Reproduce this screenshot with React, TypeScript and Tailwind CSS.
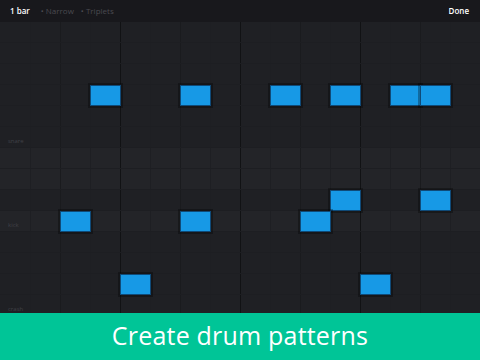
import React from "react";

const rows: { light?: boolean; label?: string; cells: number[] }[] = [
  { cells: [] },
  { cells: [] },
  { cells: [] },
  { cells: [3, 6, 9, 11, 13, 14] },
  { cells: [] },
  { cells: [], label: "snare" },
  { cells: [], light: true },
  { cells: [], light: true },
  { cells: [11, 14] },
  { cells: [2, 6, 10], label: "kick", light: true },
  { cells: [] },
  { cells: [] },
  { cells: [4, 12] },
  { cells: [], label: "crash" },
];

function lineClass(i: number) {
  if (i === 4 || i === 8 || i === 12) return "border-l border-[#111214]";
  if (i === 2 || i === 6 || i === 10 || i === 14) return "border-l border-[#1a1b1e]";
  return "border-l border-[#1e1f23]";
}

export default function App() {
  return (
    <div
      className="w-[480px] h-[360px] overflow-hidden flex flex-col bg-[#1f2024]"
      style={{ fontFamily: "'Open Sans', 'Liberation Sans', sans-serif" }}
    >
      <div className="h-[22px] shrink-0 bg-[#18181c] flex items-center px-[10px] text-[8px]">
        <span className="text-white font-semibold">1 bar</span>
        <span className="ml-[11px] text-[#4a4a50]">• Narrow</span>
        <span className="ml-[7px] text-[#4a4a50]">• Triplets</span>
        <span className="ml-auto mr-[1px] text-white font-semibold">Done</span>
      </div>
      <div className="h-[291px] shrink-0 overflow-hidden flex flex-col">
        {rows.map((r, ri) => (
          <div
            key={ri}
            className={`relative h-[21px] shrink-0 flex border-b border-[#1d1e22] ${
              r.light ? "bg-[#232428]" : "bg-[#1f2024]"
            }`}
          >
            {Array.from({ length: 16 }).map((_, ci) => (
              <div
                key={ci}
                className={`relative w-[30px] h-full shrink-0 ${ci > 0 ? lineClass(ci) : ""}`}
              >
                {r.cells.includes(ci) && (
                  <div className="absolute left-[-1px] top-0 w-[31px] h-[21px] z-10 bg-[#1799e6] border border-[#0f4a78] shadow-[0_0_0_2px_rgba(0,0,0,0.3)]" />
                )}
              </div>
            ))}
            {r.label && (
              <span className="absolute left-[8px] bottom-[3px] text-[6px] leading-none text-[#404147] z-20">
                {r.label}
              </span>
            )}
          </div>
        ))}
      </div>
      <div className="flex-1 bg-[#00c597] flex items-center justify-center">
        <span className="text-white text-[25px] font-medium tracking-[0.2px] leading-none pb-[2px]">
          Create drum patterns
        </span>
      </div>
    </div>
  );
}
